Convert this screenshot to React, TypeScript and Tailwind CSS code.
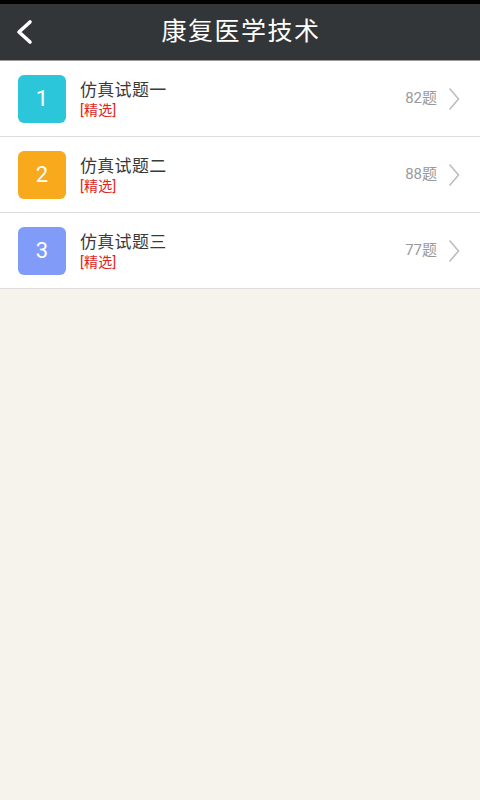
import React from 'react';

const items = [
  { n: '1', title: '仿真试题一', count: '82题', color: 'bg-[#2bc6da]' },
  { n: '2', title: '仿真试题二', count: '88题', color: 'bg-[#f8a91c]' },
  { n: '3', title: '仿真试题三', count: '77题', color: 'bg-[#819cf8]' },
];

const font = { fontFamily: 'Roboto, "Noto Sans CJK SC", sans-serif' };

export default function App() {
  return (
    <div className="w-[480px] h-[800px] bg-[#f6f3ed] flex flex-col" style={font}>
      <div className="h-[4px] bg-black" />
      <div className="h-[56px] bg-[#323638] relative flex items-center justify-center">
        <svg className="absolute left-[14px] top-[15px]" width="20" height="26" viewBox="0 0 20 26">
          <path d="M16 3 L5 13 L16 23" fill="none" stroke="#fff" strokeWidth="3.6" strokeLinecap="round" strokeLinejoin="round" />
        </svg>
        <span className="text-white text-[25px] tracking-[1.5px] pl-[2px]">康复医学技术</span>
      </div>
      <div className="h-[1px] bg-[#9a9c9d]" />
      <div className="bg-white">
        {items.map((it) => (
          <div key={it.n} className="h-[76px] flex items-center border-b border-[#dcdcdc]">
            <div className={`ml-[18px] w-[48px] h-[48px] rounded-[6px] ${it.color} flex items-center justify-center text-white text-[22px]`}>
              {it.n}
            </div>
            <div className="ml-[14px] flex flex-col flex-1">
              <span className="text-[#3a3a3a] text-[17px] leading-[22px] tracking-[0.3px]">{it.title}</span>
              <span className="text-[#e02424] text-[14px] leading-[18px] tracking-[0.3px]">[精选]</span>
            </div>
            <span className="text-[#9a9a9a] text-[15px] mr-[11px]">{it.count}</span>
            <svg className="mr-[20px]" width="12" height="24" viewBox="0 0 12 24">
              <path d="M1.5 1.5 L10.5 12 L1.5 22.5" fill="none" stroke="#bdbdbd" strokeWidth="1.6" />
            </svg>
          </div>
        ))}
      </div>
    </div>
  );
}
